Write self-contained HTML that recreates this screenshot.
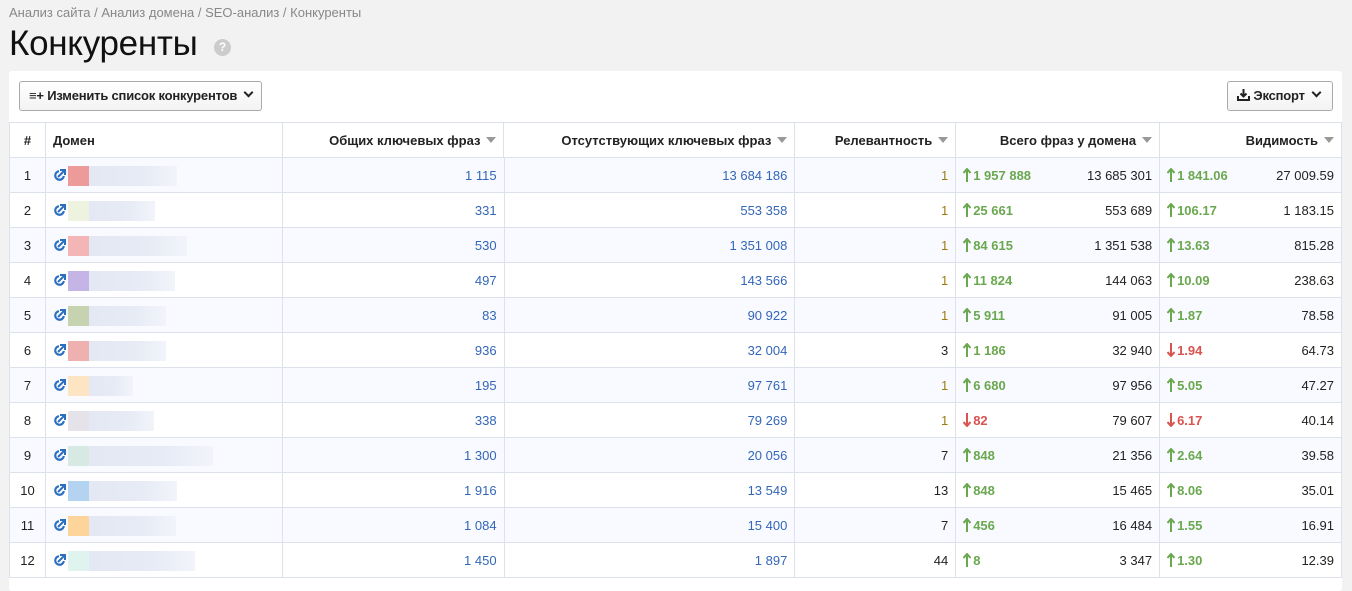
<!DOCTYPE html>
<html><head><meta charset="utf-8"><style>
*{box-sizing:border-box;margin:0;padding:0}
body{width:1352px;height:577px;background:#f2f2f2;font-family:"Liberation Sans",sans-serif;color:#222;overflow:hidden;position:relative}
.bc{position:absolute;left:9px;top:5px;font-size:13px;color:#888}
h1{position:absolute;left:9px;top:24px;font-size:35px;font-weight:normal;color:#111;letter-spacing:-0.3px}
.q{position:absolute;left:214px;top:39px;width:17px;height:17px;border-radius:50%;background:#ccc;color:#fff;font-size:12px;font-weight:bold;text-align:center;line-height:17px}
.card{position:absolute;left:9px;top:71px;width:1333px;height:520px;background:#fff;border-radius:3px}
.btn{position:absolute;top:10px;height:30px;border:1px solid #aaa;border-radius:3px;background:linear-gradient(#fff,#f3f3f3);font-size:13px;font-weight:bold;line-height:28px;padding-left:9px;color:#222;white-space:nowrap;letter-spacing:-0.2px}
table{position:absolute;left:0;top:51px;border-collapse:collapse;font-size:13px;table-layout:fixed}
td,th{border:1px solid #dde1ec;height:35px;padding:0 7px;white-space:nowrap}
th{font-weight:bold;text-align:right;height:36px}
tr:nth-child(odd) td{background:#f8faff}
th .t{display:inline-block;width:0;height:0;border-left:5px solid transparent;border-right:5px solid transparent;border-top:6px solid #999;margin-left:6px;vertical-align:2px}
td.n{text-align:right;color:#3366b8}
td.num{text-align:right}
.up{color:#6aa84f;font-weight:bold}
.dn{color:#d9534f;font-weight:bold}
.up svg,.dn svg{vertical-align:-2px;margin-right:2px}
.r1{color:#a07c10}
.dom{position:relative}
.sq{position:absolute;left:22px;top:8px;width:21px;height:20px}
.gr{position:absolute;left:43px;top:8px;height:20px;background:linear-gradient(90deg,#e3e8f4,#e6ebf5 60%,#f2f4fa)}
.ic{position:absolute;left:7px;top:11px}
.sp{float:right}
.chev{display:inline-block;width:7px;height:7px;border-right:2px solid #222;border-bottom:2px solid #222;transform:rotate(45deg);vertical-align:4px;margin-left:8px}
</style></head><body>
<div class="bc">Анализ сайта / Анализ домена / SEO-анализ / Конкуренты</div>
<h1>Конкуренты</h1><div class="q">?</div>
<div class="card">
<div class="btn" style="left:10px;width:243px">≡+ Изменить список конкурентов<span class="chev"></span></div>
<div class="btn" style="left:1218px;width:106px"><svg width="13" height="12" viewBox="0 0 13 12" style="vertical-align:-1px"><path d="M6.5 0v7M3.5 4.5l3 3 3-3" fill="none" stroke="#222" stroke-width="2"/><path d="M1 7v4h11V7" fill="none" stroke="#222" stroke-width="2"/></svg> Экспорт<span class="chev"></span></div>
<table>
<colgroup><col style="width:36px"><col style="width:237px"><col style="width:222px"><col style="width:291px"><col style="width:161px"><col style="width:204px"><col style="width:182px"></colgroup>
<tr><th style="text-align:center">#</th><th style="text-align:left">Домен</th><th>Общих ключевых фраз<span class="t"></span></th><th>Отсутствующих ключевых фраз<span class="t"></span></th><th>Релевантность<span class="t"></span></th><th>Всего фраз у домена<span class="t"></span></th><th>Видимость<span class="t"></span></th></tr>
</table>
<table style="top:86px" id="b">
<colgroup><col style="width:36px"><col style="width:237px"><col style="width:222px"><col style="width:291px"><col style="width:161px"><col style="width:204px"><col style="width:182px"></colgroup>
<tbody id="tb"></tbody></table>
</div>
<script>
var d=[
[1,"#ec9a9a",88,"1 115","13 684 186","1","1 957 888",1,"13 685 301","1 841.06",1,"27 009.59"],
[2,"#eef3e0",66,"331","553 358","1","25 661",1,"553 689","106.17",1,"1 183.15"],
[3,"#f3b5b5",98,"530","1 351 008","1","84 615",1,"1 351 538","13.63",1,"815.28"],
[4,"#c4b5e6",86,"497","143 566","1","11 824",1,"144 063","10.09",1,"238.63"],
[5,"#c5d3b0",77,"83","90 922","1","5 911",1,"91 005","1.87",1,"78.58"],
[6,"#efb0b0",77,"936","32 004","3","1 186",1,"32 940","1.94",0,"64.73"],
[7,"#fde4c2",44,"195","97 761","1","6 680",1,"97 956","5.05",1,"47.27"],
[8,"#e6e2ea",65,"338","79 269","1","82",0,"79 607","6.17",0,"40.14"],
[9,"#d6e9e2",124,"1 300","20 056","7","848",1,"21 356","2.64",1,"39.58"],
[10,"#b4d3f0",88,"1 916","13 549","13","848",1,"15 465","8.06",1,"35.01"],
[11,"#fdd49a",87,"1 084","15 400","7","456",1,"16 484","1.55",1,"16.91"],
[12,"#dff4ef",106,"1 450","1 897","44","8",1,"3 347","1.30",1,"12.39"]];
var ic='<svg class="ic" width="13" height="13" viewBox="0 0 13 13"><path d="M6 2.2A4.3 4.3 0 1 0 10.8 7" fill="none" stroke="#2a6fc0" stroke-width="2.2"/><path d="M5 8L11 2M7 1h5v5" fill="none" stroke="#2a6fc0" stroke-width="2"/></svg>';
var au='<svg width="8" height="14" viewBox="0 0 8 14"><path d="M4 14V2M0.5 5L4 1l3.5 4" fill="none" stroke="#6aa84f" stroke-width="2"/></svg>';
var ad='<svg width="8" height="14" viewBox="0 0 8 14"><path d="M4 0v12M0.5 9L4 13l3.5-4" fill="none" stroke="#d9534f" stroke-width="2"/></svg>';
var h='';d.forEach(function(r){
var a=r[7]?'<span class="up">'+au+r[6]+'</span>':'<span class="dn">'+ad+r[6]+'</span>';
var b=r[10]?'<span class="up">'+au+r[9]+'</span>':'<span class="dn">'+ad+r[9]+'</span>';
h+='<tr><td style="text-align:center">'+r[0]+'</td><td class="dom">'+ic+'<div class="sq" style="background:'+r[1]+'"></div><div class="gr" style="width:'+r[2]+'px"></div></td><td class="n">'+r[3]+'</td><td class="n">'+r[4]+'</td><td class="num '+(r[5]=="1"?'r1':'')+'">'+r[5]+'</td><td>'+a+'<span class="sp">'+r[8]+'</span></td><td>'+b+'<span class="sp">'+r[11]+'</span></td></tr>';});
document.getElementById('tb').innerHTML=h;
</script>
</body></html>
